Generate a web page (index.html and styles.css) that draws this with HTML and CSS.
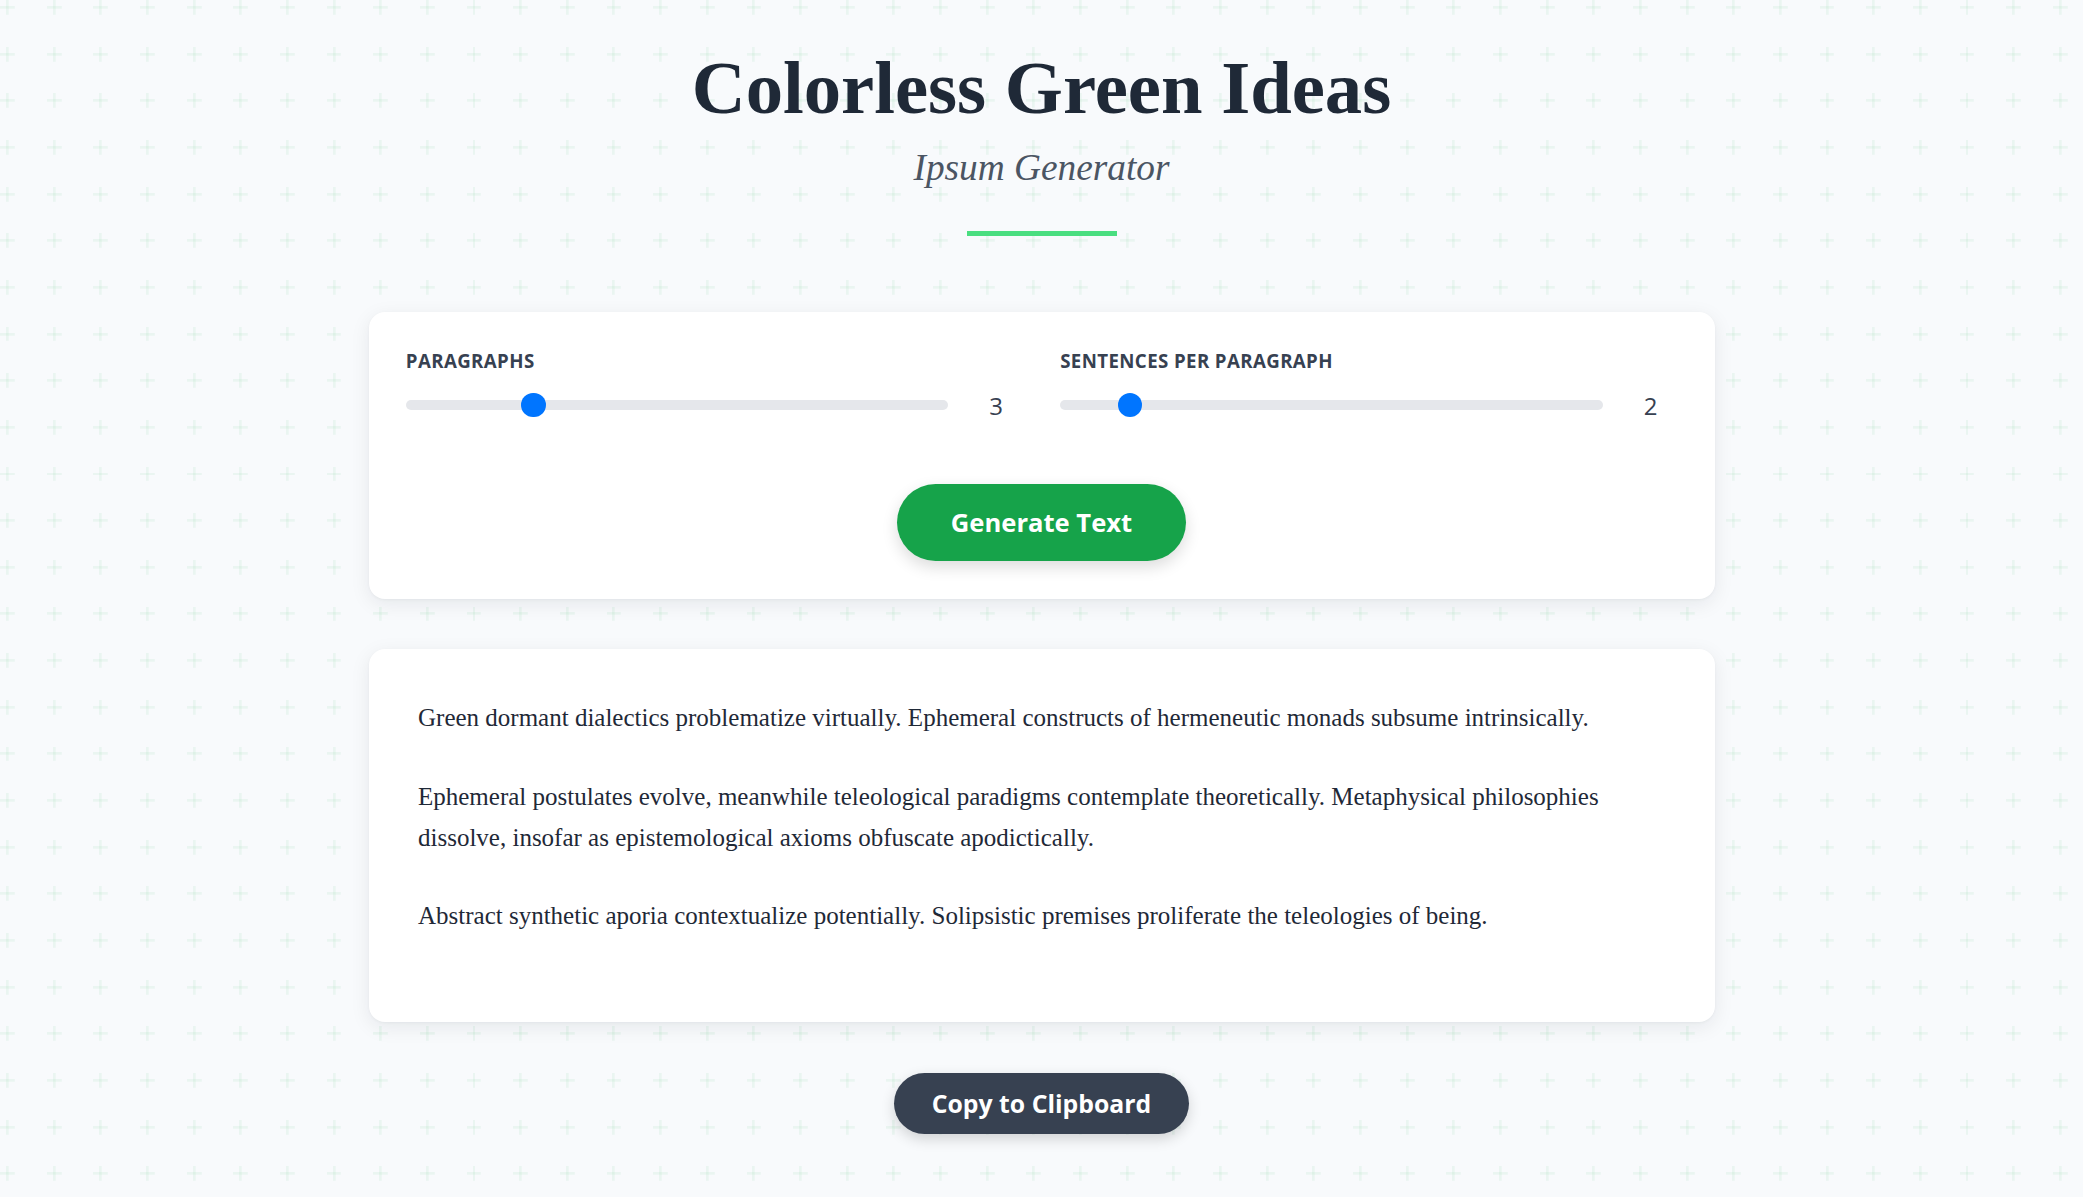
FILE: index.html
```html
<!DOCTYPE html>
<html lang="en">
<head>
<meta charset="utf-8">
<title>Colorless Green Ideas — Ipsum Generator</title>
<link rel="stylesheet" href="styles.css">
</head>
<body>
<main class="page">
  <header class="hero">
    <h1 class="title">Colorless Green Ideas</h1>
    <p class="subtitle">Ipsum Generator</p>
    <div class="accent"></div>
  </header>

  <section class="card controls">
    <div class="control-grid">
      <div class="control">
        <label class="control-label" for="paragraphs">Paragraphs</label>
        <div class="slider-row">
          <input class="slider" type="range" id="paragraphs" min="1" max="10" value="3">
          <span class="value">3</span>
        </div>
      </div>
      <div class="control">
        <label class="control-label" for="sentences">Sentences per paragraph</label>
        <div class="slider-row">
          <input class="slider" type="range" id="sentences" min="1" max="10" value="2">
          <span class="value">2</span>
        </div>
      </div>
    </div>
    <div class="actions actions-generate">
      <button class="btn btn-generate" type="button">Generate Text</button>
    </div>
  </section>

  <section class="card output">
    <p>Green dormant dialectics problematize virtually. Ephemeral constructs of hermeneutic monads subsume intrinsically.</p>
    <p>Ephemeral postulates evolve, meanwhile teleological paradigms contemplate theoretically. Metaphysical philosophies dissolve, insofar as epistemological axioms obfuscate apodictically.</p>
    <p>Abstract synthetic aporia contextualize potentially. Solipsistic premises proliferate the teleologies of being.</p>
  </section>

  <div class="actions actions-copy">
    <button class="btn btn-copy" type="button">Copy to Clipboard</button>
  </div>
</main>
</body>
</html>
```

FILE: styles.css
```css
* { box-sizing: border-box; }

html, body { height: 100%; }

body {
  margin: 0;
  min-height: 100vh;
  background-color: #f8fafc;
  background-image: url("data:image/svg+xml,%3Csvg xmlns='http://www.w3.org/2000/svg' width='35' height='35' viewBox='0 0 35 35'%3E%3Cg fill='%2316a34a' fill-opacity='0.06'%3E%3Crect x='0' y='4.5' width='11' height='2'/%3E%3Crect x='4.5' y='0' width='2' height='11'/%3E%3C/g%3E%3C/svg%3E");
  background-size: 46.667px 46.667px;
  background-position: 0 0;
  font-family: "Liberation Serif", "Times New Roman", serif;
  color: #1f2937;
}

.page {
  width: 1346px;
  margin: 0 auto;
  padding-top: 42.6px;
  display: flex;
  flex-direction: column;
}

.hero {
  display: flex;
  flex-direction: column;
  align-items: center;
  text-align: center;
}

.title {
  margin: 0;
  font-size: 74.67px;
  line-height: 1.2;
  font-weight: 700;
  color: #1f2937;
}

.subtitle {
  margin: 14.6px 0 0;
  font-size: 37.33px;
  line-height: 1.15;
  font-style: italic;
  color: #4b5563;
}

.accent {
  margin-top: 41.3px;
  width: 150px;
  height: 5.33px;
  background: #4ade80;
}

.card {
  background: #ffffff;
  border-radius: 16px;
  box-shadow: 0 5px 20px rgba(15, 23, 42, 0.08), 0 1px 3px rgba(15, 23, 42, 0.04);
}

.controls {
  margin-top: 75.4px;
  padding: 37.33px;
}

.control-grid {
  display: grid;
  grid-template-columns: 1fr 1fr;
  column-gap: 37.33px;
}

.control {
  display: flex;
  flex-direction: column;
}

.control-label {
  font-family: "Open Sans", "Noto Sans", sans-serif;
  font-size: 18.67px;
  font-weight: 700;
  text-transform: uppercase;
  letter-spacing: 0.4px;
  color: #374151;
  margin-top: -1px;
  margin-bottom: 15.5px;
}

.slider-row {
  display: flex;
  align-items: center;
  gap: 21.33px;
}

.slider {
  -webkit-appearance: none;
  appearance: none;
  flex: 1;
  min-width: 0;
  margin: 0;
  height: 10.67px;
  border-radius: 6px;
  background: #e5e7eb;
  outline: none;
}

.slider::-webkit-slider-thumb {
  -webkit-appearance: none;
  appearance: none;
  width: 24.67px;
  height: 24.67px;
  border-radius: 50%;
  background: #0075ff;
  border: none;
  cursor: pointer;
}

.value {
  width: 53.33px;
  text-align: center;
  font-family: "Open Sans", "Noto Sans", sans-serif;
  font-size: 24px;
  color: #374151;
}

.actions {
  display: flex;
  justify-content: center;
}

.actions-generate {
  margin-top: 62.2px;
}

.btn {
  border: none;
  border-radius: 999px;
  font-family: "Open Sans", "Noto Sans", sans-serif;
  font-weight: 700;
  color: #ffffff;
  cursor: pointer;
}

.btn-generate {
  background: #16a34a;
  font-size: 25.6px;
  padding: 21.33px 53.33px;
  box-shadow: 0 6px 16px rgba(0, 0, 0, 0.14);
}

.output {
  margin-top: 50.7px;
  padding: 48px 48px 48.5px 49.5px;
}

.output p {
  margin: 0 0 36.6px;
  font-size: 25px;
  line-height: 41.6px;
  color: #1f2937;
}

.actions-copy {
  margin-top: 51px;
}

.btn-copy {
  background: #374151;
  font-size: 24.8px;
  padding: 13.33px 37.33px;
  box-shadow: 0 5px 14px rgba(0, 0, 0, 0.16);
}
```
